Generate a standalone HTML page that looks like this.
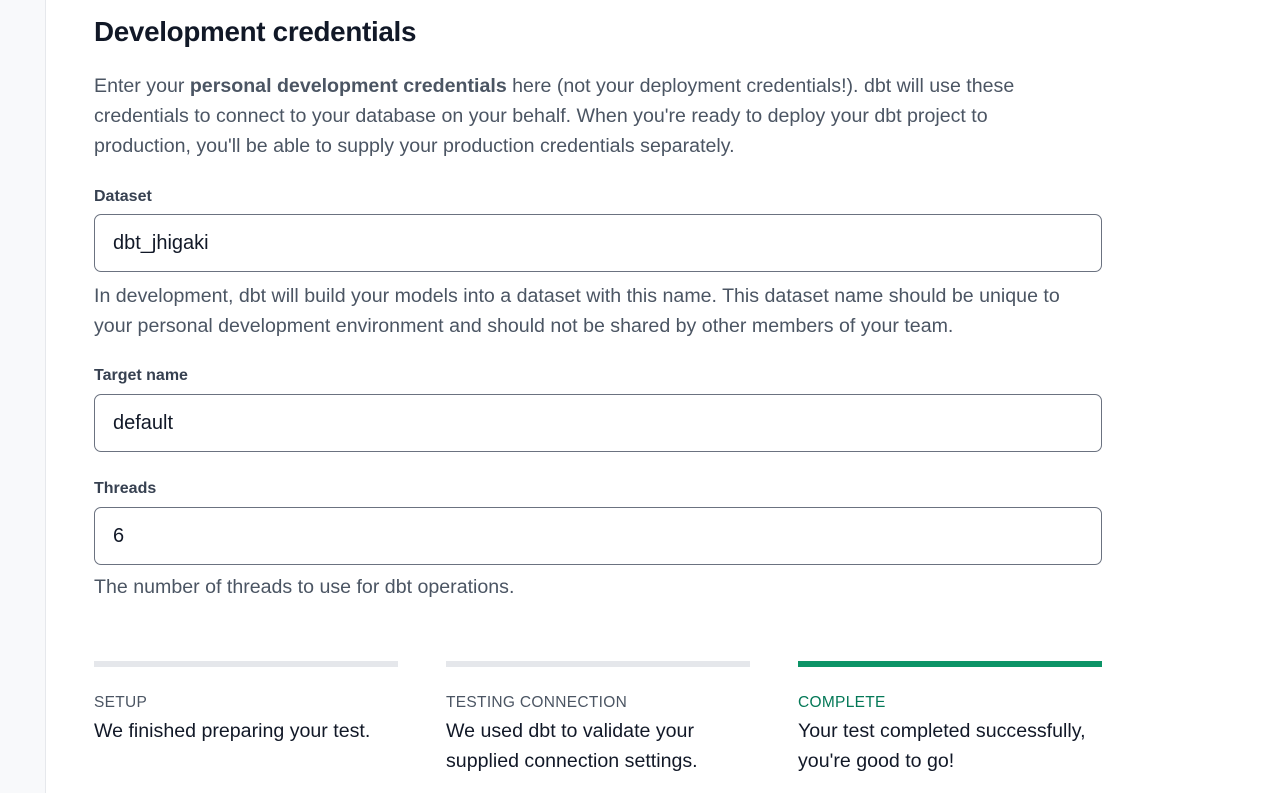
<!DOCTYPE html>
<html><head><style>
body{margin:0;width:1262px;height:793px;overflow:hidden;background:#fff;font-family:"Liberation Sans",sans-serif;position:relative}
.side{position:absolute;left:0;top:0;width:45px;height:793px;background:#f8f9fb;border-right:1px solid #e6e8ec}
.a{position:absolute;left:94px;white-space:nowrap}
h1{position:absolute;left:94px;top:16px;margin:0;font-size:27.8px;font-weight:bold;color:#111827;letter-spacing:-0.3px}
.p{color:#4b5563;font-size:19.6px;line-height:30px}
.lbl{font-size:16px;font-weight:bold;color:#374151}
.in{position:absolute;left:94px;width:1008px;height:58px;border:1px solid #6b7280;border-radius:7px;box-sizing:border-box}
.in span{position:absolute;left:18px;top:17px;font-size:20px;color:#111827}
.bar{position:absolute;top:661px;width:304px;height:6px;background:#e5e7eb}
.st{position:absolute;top:694px;font-size:15.5px;color:#4b5563;letter-spacing:0.3px}
.sd{position:absolute;top:716px;font-size:19.6px;color:#111827;line-height:30px}
</style></head><body>
<div class="side"></div>
<h1>Development credentials</h1>
<div class="a p" style="top:71px">Enter your <b>personal development credentials</b> here (not your deployment credentials!). dbt will use these<br>credentials to connect to your database on your behalf. When you're ready to deploy your dbt project to<br>production, you'll be able to supply your production credentials separately.</div>
<div class="a lbl" style="top:188px">Dataset</div>
<div class="in" style="top:214px"><span>dbt_jhigaki</span></div>
<div class="a p" style="top:281px">In development, dbt will build your models into a dataset with this name. This dataset name should be unique to<br>your personal development environment and should not be shared by other members of your team.</div>
<div class="a lbl" style="top:367px">Target name</div>
<div class="in" style="top:394px"><span>default</span></div>
<div class="a lbl" style="top:480px">Threads</div>
<div class="in" style="top:507px"><span>6</span></div>
<div class="a p" style="top:572px">The number of threads to use for dbt operations.</div>
<div class="bar" style="left:94px"></div>
<div class="bar" style="left:446px"></div>
<div class="bar" style="left:798px;background:#0d9467"></div>
<div class="st" style="left:94px">SETUP</div>
<div class="st" style="left:446px">TESTING CONNECTION</div>
<div class="st" style="left:798px;color:#047857">COMPLETE</div>
<div class="sd" style="left:94px">We finished preparing your test.</div>
<div class="sd" style="left:446px">We used dbt to validate your<br>supplied connection settings.</div>
<div class="sd" style="left:798px">Your test completed successfully,<br>you're good to go!</div>
</body></html>
